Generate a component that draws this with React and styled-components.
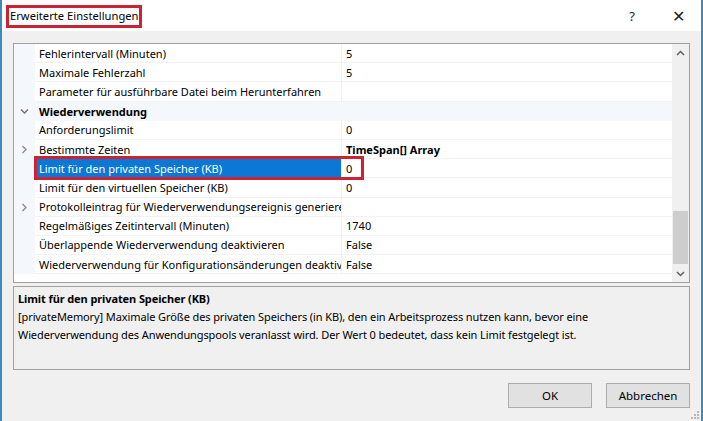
import React from "react";
import styled, { createGlobalStyle } from "styled-components";

const GlobalStyle = createGlobalStyle`
  html, body {
    margin: 0;
    padding: 0;
    background: #ffffff;
  }
  body {
    font-family: "Segoe UI", "Noto Sans", "Open Sans", sans-serif;
    font-size: 11px;
    color: #000;
  }
`;

const Window = styled.div`
  width: 703px;
  height: 421px;
  box-sizing: border-box;
  border-left: 2px solid #3d8bbd;
  border-right: 2px solid #3d8bbd;
  background: #f0f0f0;
  display: flex;
  flex-direction: column;
  position: relative;
`;

const TitleBar = styled.div`
  height: 31px;
  flex-shrink: 0;
  background: #ffffff;
  display: flex;
  align-items: center;
  padding-left: 8px;
`;

const Title = styled.span`
  font-size: 11.2px;
`;

const TitleButtons = styled.div`
  margin-left: auto;
  display: flex;
  align-items: center;
`;

const TitleButton = styled.span`
  width: 46px;
  display: flex;
  justify-content: center;
  align-items: center;
  font-size: ${(p) => p.$size || 13}px;
  color: #222;
`;

const Highlight = styled.div`
  position: absolute;
  border: 3px solid #cc2334;
  box-sizing: border-box;
  pointer-events: none;
`;

const Content = styled.div`
  flex: 1;
  display: flex;
  flex-direction: column;
  padding: 12px 11px 0 11px;
`;

const Grid = styled.div`
  height: 240px;
  box-sizing: border-box;
  border: 1px solid #a0a0a0;
  background: #ffffff;
  display: flex;
`;

const List = styled.div`
  flex: 1;
  overflow: hidden;
`;

const Row = styled.div`
  height: 19.2px;
  display: grid;
  grid-template-columns: 21px 307px 1fr;
  background: ${(p) => (p.$category ? "#f4f7fb" : "#ffffff")};
`;

const Margin = styled.div`
  background: #f4f7fb;
  display: flex;
  align-items: center;
  justify-content: center;
`;

const Label = styled.div`
  padding-left: 4px;
  display: flex;
  align-items: center;
  white-space: nowrap;
  overflow: hidden;
  border-right: ${(p) => (p.$category ? "none" : "1px solid #f0f0f0")};
  border-bottom: ${(p) => (p.$category ? "none" : "1px solid #f2f2f2")};
  background: ${(p) => (p.$selected ? "#0a78d4" : "transparent")};
  color: ${(p) => (p.$selected ? "#ffffff" : "#000")};
  font-weight: ${(p) => (p.$category ? 700 : 400)};
  box-sizing: border-box;
  grid-column: ${(p) => (p.$category ? "2 / 4" : "auto")};
`;

const Value = styled.div`
  padding-left: 4px;
  display: flex;
  align-items: center;
  white-space: nowrap;
  overflow: hidden;
  border-bottom: 1px solid #f2f2f2;
  font-weight: ${(p) => (p.$bold ? 700 : 400)};
  box-sizing: border-box;
`;

const Scrollbar = styled.div`
  width: 17px;
  background: #f0f0f0;
  display: flex;
  flex-direction: column;
`;

const ScrollArrow = styled.div`
  height: 17px;
  display: flex;
  align-items: center;
  justify-content: center;
`;

const Track = styled.div`
  flex: 1;
  display: flex;
  flex-direction: column;
`;

const Thumb = styled.div`
  margin-top: ${(p) => p.$offset}px;
  height: ${(p) => p.$size}px;
  margin-left: 1px;
  margin-right: 1px;
  background: #cdcdcd;
`;

const Description = styled.div`
  margin-top: 3px;
  height: 84px;
  box-sizing: border-box;
  border: 1px solid #a0a0a0;
  padding: 3px 4px;
  line-height: 18px;
`;

const DescTitle = styled.div`
  font-weight: 700;
  letter-spacing: -0.1px;
`;

const DescText = styled.div`
  letter-spacing: -0.1px;
  padding-right: 60px;
`;

const Footer = styled.div`
  display: flex;
  justify-content: flex-end;
  gap: 14px;
  padding-top: 13px;
`;

const Button = styled.button`
  width: 84px;
  height: 25px;
  box-sizing: border-box;
  background: #e1e1e1;
  border: 1px solid #adadad;
  font-family: inherit;
  font-size: 11.5px;
  color: #000;
  padding: 0;
`;

const Grip = styled.div`
  position: absolute;
  right: 2px;
  bottom: 2px;
  line-height: 0;
`;

const Chevron = ({ dir }) => (
  <svg width="9" height="9" viewBox="0 0 9 9">
    {dir === "down" ? (
      <polyline points="1,2.5 4.5,6 8,2.5" fill="none" stroke="#6e6e6e" strokeWidth="1.3" />
    ) : (
      <polyline points="2.5,1 6,4.5 2.5,8" fill="none" stroke="#8a8a8a" strokeWidth="1.3" />
    )}
  </svg>
);

const SmallArrow = ({ up }) => (
  <svg width="9" height="6" viewBox="0 0 9 6">
    <polyline
      points={up ? "1,5 4.5,1.5 8,5" : "1,1 4.5,4.5 8,1"}
      fill="none"
      stroke="#606060"
      strokeWidth="1.5"
    />
  </svg>
);

const rows = [
  { label: "Fehlerintervall (Minuten)", value: "5" },
  { label: "Maximale Fehlerzahl", value: "5" },
  { label: "Parameter für ausführbare Datei beim Herunterfahren", value: "" },
  { label: "Wiederverwendung", category: true },
  { label: "Anforderungslimit", value: "0" },
  { label: "Bestimmte Zeiten", value: "TimeSpan[] Array", bold: true, expand: true },
  { label: "Limit für den privaten Speicher (KB)", value: "0", selected: true },
  { label: "Limit für den virtuellen Speicher (KB)", value: "0" },
  { label: "Protokolleintrag für Wiederverwendungsereignis generieren", value: "", expand: true },
  { label: "Regelmäßiges Zeitintervall (Minuten)", value: "1740" },
  { label: "Überlappende Wiederverwendung deaktivieren", value: "False" },
  { label: "Wiederverwendung für Konfigurationsänderungen deaktivieren", value: "False" },
];

export default function App() {
  return (
    <>
      <GlobalStyle />
      <Window>
        <TitleBar>
          <Title>Erweiterte Einstellungen</Title>
          <TitleButtons>
            <TitleButton $size={13}>?</TitleButton>
            <TitleButton $size={16}>✕</TitleButton>
          </TitleButtons>
        </TitleBar>
        <Highlight style={{ left: 4, top: 5, width: 136, height: 23 }} />
        <Content>
          <Grid>
            <List>
              {rows.map((r) =>
                r.category ? (
                  <Row key={r.label} $category>
                    <Margin>
                      <Chevron dir="down" />
                    </Margin>
                    <Label $category>{r.label}</Label>
                  </Row>
                ) : (
                  <Row key={r.label}>
                    <Margin>{r.expand && <Chevron dir="right" />}</Margin>
                    <Label $selected={r.selected}>{r.label}</Label>
                    <Value $bold={r.bold}>{r.value}</Value>
                  </Row>
                )
              )}
            </List>
            <Scrollbar>
              <ScrollArrow>
                <SmallArrow up />
              </ScrollArrow>
              <Track>
                <Thumb $offset={150} $size={53} />
              </Track>
              <ScrollArrow>
                <SmallArrow />
              </ScrollArrow>
            </Scrollbar>
          </Grid>
          <Description>
            <DescTitle>Limit für den privaten Speicher (KB)</DescTitle>
            <DescText>
              [privateMemory] Maximale Größe des privaten Speichers (in KB), den ein Arbeitsprozess
              nutzen kann, bevor eine Wiederverwendung des Anwendungspools veranlasst wird. Der Wert
              0 bedeutet, dass kein Limit festgelegt ist.
            </DescText>
          </Description>
          <Footer>
            <Button>OK</Button>
            <Button>Abbrechen</Button>
          </Footer>
        </Content>
        <Highlight style={{ left: 32, top: 156, width: 330, height: 24 }} />
        <Grip>
          <svg width="8" height="8" viewBox="0 0 8 8" fill="#b8b8b8">
            <rect x="6" y="0" width="2" height="2" />
            <rect x="3" y="3" width="2" height="2" />
            <rect x="6" y="3" width="2" height="2" />
            <rect x="0" y="6" width="2" height="2" />
            <rect x="3" y="6" width="2" height="2" />
            <rect x="6" y="6" width="2" height="2" />
          </svg>
        </Grip>
      </Window>
    </>
  );
}
